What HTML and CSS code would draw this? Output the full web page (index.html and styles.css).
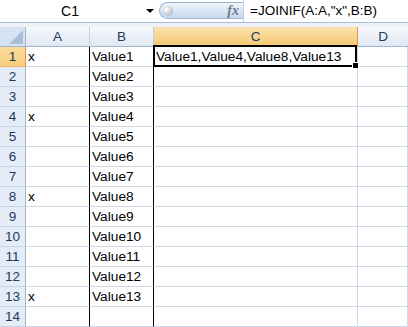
FILE: index.html
```html
<!DOCTYPE html>
<html lang="en">
<head>
  <meta charset="UTF-8">
  <title>JOINIF</title>
  <link rel="stylesheet" href="styles.css">
</head>
<body>
  <div class="formula-bar">
    <div class="name-box">
      <span class="name">C1</span>
      <span class="arrow"></span>
    </div>
    <div class="fx-pill">
      <span class="orb"></span>
      <span class="fx">fx</span>
    </div>
    <div class="formula">=JOINIF(A:A,"x",B:B)</div>
  </div>
  <div class="strip"></div>

  <div class="sheet">
    <div class="corner"><span class="corner-tri"></span></div>
    <div class="col-head">A</div>
    <div class="col-head">B</div>
    <div class="col-head active">C</div>
    <div class="col-head last">D</div>

    <div class="row-head active">1</div>
    <div class="cell col-a">x</div>
    <div class="cell col-b">Value1</div>
    <div class="cell selected">Value1,Value4,Value8,Value13<span class="selection"><span class="handle"></span></span></div>
    <div class="cell"></div>

    <div class="row-head">2</div>
    <div class="cell col-a"></div>
    <div class="cell col-b">Value2</div>
    <div class="cell"></div>
    <div class="cell"></div>

    <div class="row-head">3</div>
    <div class="cell col-a"></div>
    <div class="cell col-b">Value3</div>
    <div class="cell"></div>
    <div class="cell"></div>

    <div class="row-head">4</div>
    <div class="cell col-a">x</div>
    <div class="cell col-b">Value4</div>
    <div class="cell"></div>
    <div class="cell"></div>

    <div class="row-head">5</div>
    <div class="cell col-a"></div>
    <div class="cell col-b">Value5</div>
    <div class="cell"></div>
    <div class="cell"></div>

    <div class="row-head">6</div>
    <div class="cell col-a"></div>
    <div class="cell col-b">Value6</div>
    <div class="cell"></div>
    <div class="cell"></div>

    <div class="row-head">7</div>
    <div class="cell col-a"></div>
    <div class="cell col-b">Value7</div>
    <div class="cell"></div>
    <div class="cell"></div>

    <div class="row-head">8</div>
    <div class="cell col-a">x</div>
    <div class="cell col-b">Value8</div>
    <div class="cell"></div>
    <div class="cell"></div>

    <div class="row-head">9</div>
    <div class="cell col-a"></div>
    <div class="cell col-b">Value9</div>
    <div class="cell"></div>
    <div class="cell"></div>

    <div class="row-head">10</div>
    <div class="cell col-a"></div>
    <div class="cell col-b">Value10</div>
    <div class="cell"></div>
    <div class="cell"></div>

    <div class="row-head">11</div>
    <div class="cell col-a"></div>
    <div class="cell col-b">Value11</div>
    <div class="cell"></div>
    <div class="cell"></div>

    <div class="row-head">12</div>
    <div class="cell col-a"></div>
    <div class="cell col-b">Value12</div>
    <div class="cell"></div>
    <div class="cell"></div>

    <div class="row-head">13</div>
    <div class="cell col-a">x</div>
    <div class="cell col-b">Value13</div>
    <div class="cell"></div>
    <div class="cell"></div>

    <div class="row-head">14</div>
    <div class="cell col-a"></div>
    <div class="cell col-b"></div>
    <div class="cell"></div>
    <div class="cell"></div>
  </div>
</body>
</html>
```

FILE: styles.css
```css
body {
  margin: 0;
  padding: 0;
  background-color: #ffffff;
  font-family: "Liberation Sans", Arial, sans-serif;
  color: #000000;
  overflow: hidden;
}

/* formula bar */

.formula-bar {
  display: flex;
  height: 22px;
  background-color: #ffffff;
  border-bottom: 1px solid #a9bdd5;
}

.name-box {
  width: 159px;
  display: flex;
  align-items: center;
}

.name-box .name {
  width: 140px;
  text-align: center;
  font-size: 14px;
}

.name-box .arrow {
  margin-left: 6px;
  width: 0;
  height: 0;
  border-left: 4px solid transparent;
  border-right: 4px solid transparent;
  border-top: 4px solid #000000;
}

.fx-pill {
  margin-top: 2px;
  width: 84px;
  height: 17px;
  box-sizing: border-box;
  border: 1px solid #9bb3d0;
  border-right: none;
  border-radius: 9px 0 0 9px;
  background: linear-gradient(#eef3fa, #c8d8ee);
  display: flex;
  align-items: center;
  padding-left: 3px;
}

.orb {
  width: 10px;
  height: 10px;
  border-radius: 50%;
  background: radial-gradient(circle at 35% 35%, #ffffff, #b9bec6 70%, #9ba2ac);
}

.fx {
  margin-left: auto;
  margin-right: 4px;
  font-family: "Liberation Serif", "Times New Roman", serif;
  font-style: italic;
  font-weight: bold;
  font-size: 14px;
  color: #6f7a88;
}

.formula {
  flex: 1;
  padding-left: 6px;
  font-size: 13.5px;
  line-height: 22px;
  border-left: 1px solid #c5d3e4;
}

.strip {
  height: 4px;
  background-color: #eef2f8;
}

/* sheet grid */

.sheet {
  display: grid;
  grid-template-columns: 26px 64px 64px 204px 1fr;
  grid-auto-rows: 20px;
  font-size: 13.7px;
}

.sheet > div {
  box-sizing: border-box;
}

.corner {
  position: relative;
  background-color: #d7e3f2;
  border-right: 1px solid #9eb6ce;
  border-bottom: 1px solid #9eb6ce;
}

.corner-tri {
  position: absolute;
  right: 2px;
  bottom: 2px;
  width: 0;
  height: 0;
  border-left: 14px solid transparent;
  border-bottom: 14px solid #a9c0da;
}

.col-head {
  display: flex;
  align-items: center;
  justify-content: center;
  background: linear-gradient(#f6f8fc, #e1e8f2);
  border-right: 1px solid #c3d1e2;
  border-bottom: 1px solid #9eb6ce;
  color: #1e395b;
  font-size: 13.5px;
}

.col-head.active {
  background: linear-gradient(#fbe2b2, #f4c870);
  border-bottom-color: #f29436;
  border-right-color: #f29436;
}

.col-head.last {
  border-right: none;
}

.row-head {
  display: flex;
  align-items: center;
  justify-content: center;
  background-color: #e4ecf7;
  border-right: 1px solid #9eb6ce;
  border-bottom: 1px solid #c5d4e6;
  color: #1e395b;
  font-size: 13.5px;
}

.row-head.active {
  background: linear-gradient(#fadc9e, #f6cd7c);
  border-right-color: #f29436;
  border-bottom-color: #f2b45e;
}

.cell {
  padding-left: 2px;
  line-height: 19px;
  white-space: nowrap;
  border-right: 1px solid #d0d7e5;
  border-bottom: 1px solid #d0d7e5;
}

.cell.col-a,
.cell.col-b {
  border-right-color: #000000;
}

.cell.selected {
  position: relative;
}

.selection {
  position: absolute;
  left: -1px;
  top: -2px;
  right: 0;
  bottom: -1px;
  border: 2px solid #000000;
  box-shadow: inset 0 0 0 1px #ffffff;
}

.handle {
  position: absolute;
  right: -4px;
  bottom: -4px;
  width: 5px;
  height: 5px;
  background-color: #000000;
  border: 1px solid #ffffff;
}
```
